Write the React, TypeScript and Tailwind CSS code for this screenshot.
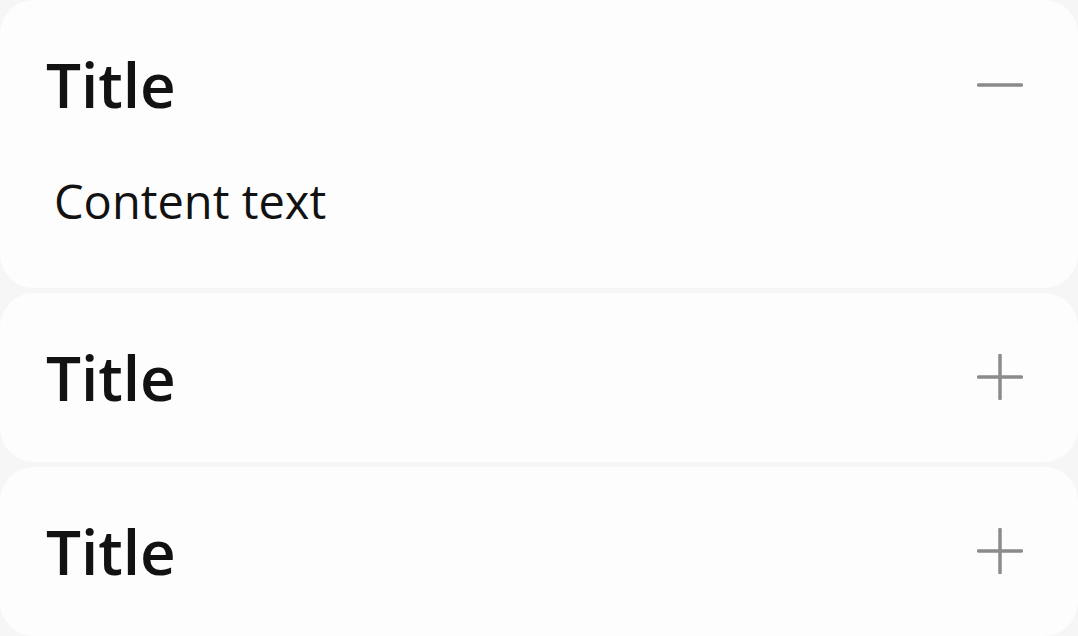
import React, { useState } from 'react';

const items = [
  { id: 1, title: 'Title', content: 'Content text' },
  { id: 2, title: 'Title', content: 'Content text' },
  { id: 3, title: 'Title', content: 'Content text' },
];

const ToggleIcon: React.FC<{ open: boolean }> = ({ open }) => (
  <svg width="46" height="46" viewBox="0 0 46 46" fill="none" stroke="#8b8b8b" strokeWidth="3.5" strokeLinecap="round">
    <line x1="1.5" y1="23" x2="44.5" y2="23" />
    {!open && <line x1="23" y1="1.5" x2="23" y2="44.5" />}
  </svg>
);

export default function App() {
  const [openId, setOpenId] = useState<number | null>(1);

  return (
    <div className="w-[1078px] h-[636px] overflow-hidden bg-[#f6f6f6] flex flex-col gap-[5px] font-['Open_Sans',sans-serif] text-[#121212]">
      {items.map((item) => {
        const open = openId === item.id;
        return (
          <div key={item.id} className="bg-[#fdfdfd] rounded-[34px] pl-[46px] pr-[55px] shrink-0">
            <button
              onClick={() => setOpenId(open ? null : item.id)}
              className="w-full h-[169px] flex items-center justify-between text-left"
            >
              <span className="text-[62px] font-semibold leading-normal">{item.title}</span>
              <ToggleIcon open={open} />
            </button>
            {open && (
              <div className="pl-[8px] pb-[51px] -mt-[3px] text-[47px] leading-normal">
                {item.content}
              </div>
            )}
          </div>
        );
      })}
    </div>
  );
}
